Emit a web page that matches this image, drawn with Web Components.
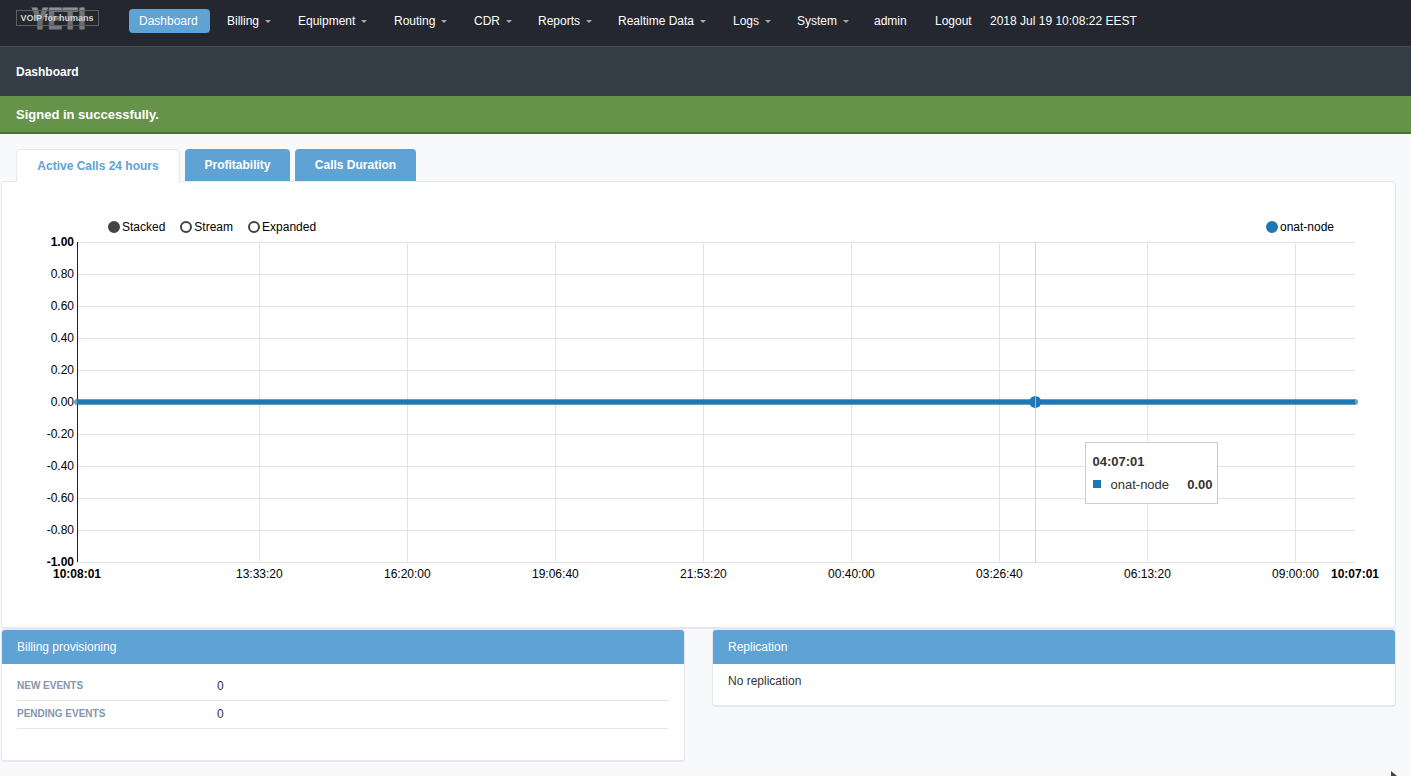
<!DOCTYPE html>
<html lang="en">
<head>
<meta charset="utf-8">
<meta name="viewport" content="width=device-width, initial-scale=1">
<title>Dashboard | Yeti</title>
<style>
html, body { margin: 0; min-height: 100%; }
body { background: #f8f9fb; color: #323537; font: 12px/18px "Liberation Sans", Arial, sans-serif; }
</style>
</head>
<body>
<yeti-header></yeti-header>
<page-title>Dashboard</page-title>
<flash-notice>Signed in successfully.</flash-notice>
<dashboard-content>
  <tab-strip slot="tabs"></tab-strip>
  <calls-chart slot="chart"></calls-chart>
  <info-panel slot="panels" heading="Billing provisioning"><attribute-list></attribute-list></info-panel>
  <info-panel slot="panels" heading="Replication">No replication</info-panel>
</dashboard-content>
<mouse-pointer></mouse-pointer>
<script>
const define = (name, html, setup) => {
  const template = document.createElement('template');
  template.innerHTML = html;
  customElements.define(name, class extends HTMLElement {
    connectedCallback() {
      if (this.shadowRoot) return;
      const root = this.attachShadow({ mode: 'open' });
      root.append(template.content.cloneNode(true));
      if (setup) setup(this, root);
    }
  });
};

define('yeti-logo', `
<style>
:host { display: block; width: 83px; height: 31px; }
svg { display: block; overflow: visible; }
.mark { font: bold 29px "Roboto Condensed", "Liberation Sans Narrow", "Open Sans Condensed", "Liberation Sans", sans-serif; fill: url(#metal); stroke: url(#metal); stroke-width: 1px; }
.tag { font: bold 9px "Liberation Sans", Arial, sans-serif; fill: #d0d1d2; }
</style>
<svg width="83" height="31" role="img" aria-label="Yeti">
  <defs><linearGradient id="metal" x1="0" y1="0" x2="0" y2="1"><stop offset="0" stop-color="#96989a"/><stop offset="1" stop-color="#6c6f73"/></linearGradient></defs>
  <text class="mark" x="43" y="29" text-anchor="middle">YETI</text>
  <rect x="0.5" y="10.5" width="82" height="15" fill="#24272f" fill-opacity=".2" stroke="#5c6065"/>
  <text class="tag" x="41" y="21" text-anchor="middle">VOIP for humans</text>
</svg>`);

define('nav-item', `
<style>
:host { display: block; }
a { display: flex; align-items: center; height: 24px; box-sizing: border-box; padding: 0 10px; border-radius: 4px; color: #fff; text-decoration: none; white-space: nowrap; }
:host([active]) a { background: #5fa2d4; }
:host([menu]) a::after { content: ""; margin: 1px 0 0 6px; border: 3px solid transparent; border-top-color: #aaa; border-bottom: 0; }
</style>
<a href="#"><slot></slot></a>`);

define('yeti-header', `
<style>
:host { display: flex; height: 46px; background: #24272f; border-bottom: 1px solid #434e59; padding-left: 16px; color: #fff; }
nav { display: grid; grid-template-columns: 88px 71px 96px 80px 64px 80px 115px 64px 77px 61px 65px; margin: 9px 0 0 30px; }
nav-item[active] { margin-right: 7px; }
time { margin-top: 12px; white-space: nowrap; }
</style>
<yeti-logo></yeti-logo>
<nav aria-label="Main">
  <nav-item active>Dashboard</nav-item><nav-item menu>Billing</nav-item><nav-item menu>Equipment</nav-item>
  <nav-item menu>Routing</nav-item><nav-item menu>CDR</nav-item><nav-item menu>Reports</nav-item>
  <nav-item menu>Realtime Data</nav-item><nav-item menu>Logs</nav-item><nav-item menu>System</nav-item>
  <nav-item>admin</nav-item><nav-item>Logout</nav-item>
</nav>
<time datetime="2018-07-19T10:08:22+03:00">2018 Jul 19 10:08:22 EEST</time>`);

define('page-title', `
<style>
:host { display: block; background: #353d47; padding: 17px 16px 15px; color: #fff; }
h1 { margin: 0; font-size: 12px; line-height: 17px; }
</style>
<h1><slot></slot></h1>`);

define('flash-notice', `
<style>
:host { display: block; background: #66934a; border-bottom: 2px solid #4c7033; padding: 10px 16px 8px; color: #fff; font-size: 13px; font-weight: bold; }
</style>
<div role="status"><slot></slot></div>`);

define('dashboard-content', `
<style>
:host { display: block; padding: 15px 15px 14px 1px; }
.panels { display: grid; grid-template-columns: 1fr 1fr; gap: 27px; align-items: start; }
</style>
<slot name="tabs"></slot>
<slot name="chart"></slot>
<div class="panels"><slot name="panels"></slot></div>`);

define('tab-strip', `
<style>
:host { display: grid; grid-template-columns: 164px 105px 121px; gap: 5px; padding-left: 15px; position: relative; }
button { height: 32px; border: 0; border-radius: 4px 4px 0 0; padding: 0; background: #5fa2d4; color: #fff; font: bold 12px/18px "Liberation Sans", Arial, sans-serif; white-space: nowrap; }
button[aria-selected=true] { height: 33px; margin-bottom: -1px; border: 1px solid #e5e8ee; border-bottom: 0; background: #fff; color: #5fa2d4; }
</style>
<button role="tab" aria-selected="true">Active Calls 24 hours</button>
<button role="tab" aria-selected="false">Profitability</button>
<button role="tab" aria-selected="false">Calls Duration</button>`, host => host.setAttribute('role', 'tablist'));

define('chart-option', `
<style>
:host { display: block; }
label { display: flex; align-items: center; gap: 2px; color: #000; white-space: nowrap; }
input { appearance: none; box-sizing: border-box; width: 12px; height: 12px; margin: 0; border: 2px solid var(--dot, #444); border-radius: 50%; }
input:checked { background: var(--dot, #444); }
</style>
<label><input><span><slot></slot></span></label>`, (host, root) => {
  const input = root.querySelector('input');
  input.type = host.getAttribute('type');
  input.checked = host.hasAttribute('checked');
});

define('chart-tooltip', `
<style>
:host { display: block; box-sizing: border-box; width: 133px; height: 62px; padding: 10px 4px 0 7px; background: #fff; border: 1px solid #ccc; color: #333; font-size: 13px; }
b { display: block; }
.row { display: flex; align-items: center; margin-top: 5px; }
i { width: 8px; height: 8px; margin: 0 10px 2px 0; background: #1f77b4; }
.row b { margin-left: auto; }
</style>
<b>04:07:01</b>
<div class="row"><i></i><span>onat-node</span><b>0.00</b></div>`);

define('calls-chart', `
<style>
:host { display: block; background: #fff; border: 1px solid #e5e8ee; border-bottom-width: 2px; border-radius: 4px; padding: 36px 40px 65px 75px; }
.legend { display: flex; justify-content: space-between; padding: 0 21px 0 31px; margin-bottom: 6px; }
fieldset { display: flex; gap: 15px; border: 0; margin: 0; padding: 0; }
.plot { position: relative; height: 320px; }
svg { display: block; width: 100%; height: 320px; overflow: visible; font-size: 12px; }
.grid line { stroke: #e3e3e3; shape-rendering: crispEdges; }
.axis { stroke: #222; shape-rendering: crispEdges; }
.edge { font-weight: bold; }
chart-tooltip { position: absolute; top: 200px; left: calc(75% + 49px); }
</style>
<div class="legend">
  <fieldset aria-label="Chart style">
    <chart-option type="radio" checked>Stacked</chart-option>
    <chart-option type="radio">Stream</chart-option>
    <chart-option type="radio">Expanded</chart-option>
  </fieldset>
  <chart-option type="checkbox" checked style="--dot:#1f77b4">onat-node</chart-option>
</div>
<div class="plot">
  <svg role="img" aria-label="Active calls over 24 hours"></svg>
  <chart-tooltip></chart-tooltip>
</div>`, (host, root) => {
  const start = 10 * 3600 + 8 * 60 + 1, span = 86340;
  const percent = seconds => (seconds - start) / span * 100 + '%';
  const clock = seconds => [seconds / 3600 % 24, seconds / 60 % 60, seconds % 60]
    .map(n => String(Math.floor(n)).padStart(2, '0')).join(':');
  let grid = '', labels = '';
  for (let i = 0; i <= 10; i++) {
    const y = i * 32;
    grid += `<line x1="0" x2="100%" y1="${y}" y2="${y}"/>`;
    labels += `<text x="-3" y="${y + 4}" text-anchor="end" class="${i % 10 ? '' : 'edge'}">${(1 - i / 5).toFixed(2)}</text>`;
  }
  for (let t = 48800; t < start + span; t += 10000) {
    grid += `<line x1="${percent(t)}" x2="${percent(t)}" y1="0" y2="320"/>`;
    labels += `<text x="${percent(t)}" y="336" text-anchor="middle">${clock(t)}</text>`;
  }
  for (const t of [start, start + span])
    labels += `<text x="${percent(t)}" y="336" text-anchor="middle" class="edge">${clock(t)}</text>`;
  const hover = percent(28 * 3600 + 7 * 60 + 1);
  root.querySelector('svg').innerHTML = `
    <g class="grid">${grid}</g>
    <line class="axis" x1="0" x2="0" y1="0" y2="320"/>
    <line x1="0" x2="100%" y1="160" y2="160" stroke="#1f77b4" stroke-opacity=".7" stroke-width="6" stroke-linecap="round"/>
    <line x1="0" x2="100%" y1="160" y2="160" stroke="#1f77b4" stroke-width="4"/>
    <circle cx="${hover}" cy="160" r="6" fill="#1f77b4"/>
    <line x1="${hover}" x2="${hover}" y1="0" y2="320" stroke="#ccc" stroke-opacity=".8" shape-rendering="crispEdges"/>
    <g fill="#000">${labels}</g>`;
});

define('info-panel', `
<style>
:host { display: block; box-sizing: border-box; background: #fff; border: 1px solid #e5e8ee; border-bottom-width: 2px; border-radius: 4px; overflow: hidden; }
h3 { margin: 0; padding: 8px 15px; background: #5fa2d4; color: #fff; font-size: 12px; line-height: 18px; font-weight: normal; }
.body { padding: 8px 15px 15px; }
</style>
<h3></h3>
<div class="body"><slot></slot></div>`, (host, root) => {
  root.querySelector('h3').textContent = host.getAttribute('heading');
});

define('attribute-list', `
<style>
:host { display: block; padding: 1px 1px 16px 0; }
table { width: 100%; border-collapse: separate; border-spacing: 0; }
th, td { box-sizing: border-box; height: 28px; padding: 0 0 1px; border-bottom: 1px solid #e4e6e9; text-align: left; }
th { width: 200px; color: #8596ad; font-size: 10px; text-transform: uppercase; }
</style>
<table>
  <tr><th scope="row">New Events</th><td>0</td></tr>
  <tr><th scope="row">Pending Events</th><td>0</td></tr>
</table>`);

define('mouse-pointer', `
<style>
:host { display: block; position: fixed; right: 14px; bottom: 0; }
svg { display: block; }
</style>
<svg width="6" height="5" aria-hidden="true"><path d="M0 0l6 5H0z" fill="#444"/></svg>`);
</script>
</body>
</html>
